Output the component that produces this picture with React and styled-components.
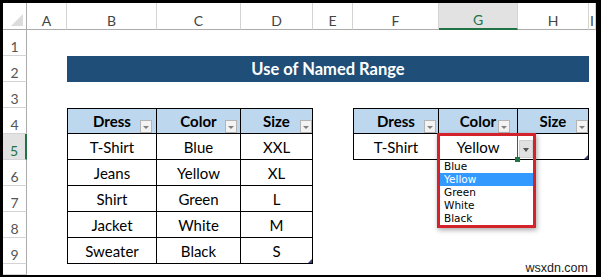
import React from "react";
import styled, { createGlobalStyle } from "styled-components";

const GlobalStyle = createGlobalStyle`
  html, body {
    margin: 0;
    padding: 0;
    background: #000;
  }
  body {
    width: 601px;
    height: 277px;
    overflow: hidden;
  }
`;

const Frame = styled.div`
  width: 601px;
  height: 277px;
  box-sizing: border-box;
  padding: 3px 5px 2px 3px;
  background: #000;
`;

const Sheet = styled.div`
  position: relative;
  width: 100%;
  height: 100%;
  background: #fff;
  display: grid;
  grid-template-columns: 24px 40px 90px 84px 72px 40px 86px 79px 71px 1fr;
  grid-template-rows: 27px repeat(9, 26px) 1fr;
  overflow: hidden;
  font-family: Lato, "Liberation Sans", sans-serif;
`;

const Corner = styled.div`
  grid-column: 1;
  grid-row: 1;
  position: relative;
  box-sizing: border-box;
  border-right: 1px solid #ababab;
  border-bottom: 1px solid #ababab;

  &::after {
    content: "";
    position: absolute;
    right: 3px;
    bottom: 3px;
    width: 12px;
    height: 12px;
    background: #dcdcdc;
    clip-path: polygon(100% 0, 100% 100%, 0 100%);
  }
`;

const ColHeader = styled.div`
  grid-row: 1;
  grid-column: ${(p) => p.col};
  display: flex;
  align-items: flex-end;
  justify-content: center;
  box-sizing: border-box;
  padding-bottom: 0;
  border-right: 1px solid #d4d4d4;
  border-bottom: ${(p) => (p.active ? "2px solid #217346" : "1px solid #ababab")};
  background: ${(p) => (p.active ? "#e2e2e2" : "#fff")};
  color: ${(p) => (p.active ? "#217346" : "#444")};
  font-size: 14px;
`;

const RowHeader = styled.div`
  grid-column: 1;
  grid-row: ${(p) => p.row};
  display: flex;
  align-items: flex-end;
  justify-content: center;
  box-sizing: border-box;
  padding-bottom: 0;
  border-bottom: 1px solid #d4d4d4;
  border-right: ${(p) => (p.active ? "2px solid #217346" : "1px solid #ababab")};
  background: ${(p) => (p.active ? "#e2e2e2" : "#fff")};
  color: ${(p) => (p.active ? "#217346" : "#555")};
  font-size: 14px;
`;

const Title = styled.div`
  grid-column: 3 / 10;
  grid-row: 3;
  display: flex;
  align-items: center;
  justify-content: center;
  background: #1f4e78;
  color: #fff;
  font-weight: 700;
  font-size: 16.5px;
`;

const Table = styled.div`
  grid-column: ${(p) => p.cols};
  grid-row: ${(p) => p.rows};
  position: relative;
  display: grid;
  grid-template-columns: ${(p) => p.widths};
  grid-template-rows: 25px;
  grid-auto-rows: 26px;
  box-sizing: border-box;
  border-top: 1px solid #000;
  border-left: 1px solid #000;
`;

const Cell = styled.div`
  position: relative;
  display: flex;
  align-items: center;
  justify-content: center;
  box-sizing: border-box;
  border-right: 1px solid #000;
  border-bottom: 1px solid #000;
  background: ${(p) => (p.head ? "#bdd7ee" : "#fff")};
  font-weight: ${(p) => (p.head ? 700 : 400)};
  font-size: 15px;
  color: #000;
`;

const FilterButton = styled.span`
  position: absolute;
  right: ${(p) => p.gap}px;
  bottom: 0;
  width: 12px;
  height: 13px;
  box-sizing: border-box;
  border: 1px solid #b4b4b4;
  background: #f3f3f3;

  &::after {
    content: "";
    position: absolute;
    left: 2px;
    top: 5px;
    border-left: 3px solid transparent;
    border-right: 3px solid transparent;
    border-top: 3px solid #808080;
  }
`;

const ResizeMark = styled.span`
  position: absolute;
  right: 1px;
  bottom: 1px;
  width: 4px;
  height: 4px;
  background: #34408a;
  clip-path: polygon(100% 0, 100% 100%, 0 100%);
`;

const SelectionEdge = styled.span`
  position: absolute;
  right: -2px;
  top: -1px;
  width: 2px;
  height: 25px;
  background: #217346;
`;

const FillHandle = styled.span`
  position: absolute;
  right: -3px;
  bottom: -3px;
  width: 5px;
  height: 5px;
  background: #217346;
  z-index: 3;
`;

const DropButton = styled.span`
  position: absolute;
  left: 80px;
  top: 6px;
  width: 14px;
  height: 18px;
  box-sizing: border-box;
  border: 1px solid #d0d0d0;
  background: #e1e1e1;
  z-index: 1;

  &::after {
    content: "";
    position: absolute;
    left: 3px;
    top: 7px;
    border-left: 3.5px solid transparent;
    border-right: 3.5px solid transparent;
    border-top: 4px solid #555;
  }
`;

const DropFrame = styled.div`
  position: absolute;
  left: -2px;
  top: -1px;
  width: 99px;
  height: 95px;
  box-sizing: border-box;
  border: 3px solid #d3222a;
  box-shadow: 1px 2px 5px rgba(0, 0, 0, 0.35);
  display: flex;
  flex-direction: column;
  justify-content: flex-end;
  z-index: 2;
`;

const List = styled.ul`
  margin: 0;
  padding: 0;
  list-style: none;
  background: #fff;
  font-family: "DejaVu Sans", "Noto Sans", sans-serif;
  font-weight: 400;
  font-size: 10.5px;
`;

const ListItem = styled.li`
  height: 13px;
  line-height: 13px;
  padding-left: 4px;
  text-align: left;
  background: ${(p) => (p.selected ? "#3399ff" : "transparent")};
  color: ${(p) => (p.selected ? "#fff" : "#000")};
`;

const Watermark = styled.div`
  position: absolute;
  right: 8px;
  bottom: 0;
  font-family: "Liberation Sans", Arial, sans-serif;
  font-size: 12.5px;
  color: #1a1a1a;
`;

const columns = ["A", "B", "C", "D", "E", "F", "G", "H", "I"];

const dresses = [
  ["T-Shirt", "Blue", "XXL"],
  ["Jeans", "Yellow", "XL"],
  ["Shirt", "Green", "L"],
  ["Jacket", "White", "M"],
  ["Sweater", "Black", "S"],
];

const colorOptions = ["Blue", "Yellow", "Green", "White", "Black"];

function HeadCell({ label, gap }) {
  return (
    <Cell head>
      {label}
      <FilterButton gap={gap} />
    </Cell>
  );
}

export default function App() {
  return (
    <>
      <GlobalStyle />
      <Frame>
        <Sheet>
          <Corner />
          {columns.map((c, i) => (
            <ColHeader key={c} col={i + 2} active={c === "G"}>
              {c}
            </ColHeader>
          ))}
          {Array.from({ length: 10 }, (_, i) => (
            <RowHeader key={i} row={i + 2} active={i === 4}>
              {i < 9 ? i + 1 : ""}
            </RowHeader>
          ))}

          <Title>Use of Named Range</Title>

          <Table cols="3 / 6" rows="5 / 11" widths="89px 84px 72px">
            <HeadCell label="Dress" gap={4} />
            <HeadCell label="Color" gap={3} />
            <HeadCell label="Size" gap={0} />
            {dresses.map((row) =>
              row.map((v, j) => <Cell key={row[0] + j}>{v}</Cell>)
            )}
            <ResizeMark />
          </Table>

          <Table cols="7 / 10" rows="5 / 7" widths="85px 79px 71px">
            <HeadCell label="Dress" gap={2} />
            <HeadCell label="Color" gap={7} />
            <HeadCell label="Size" gap={0} />
            <Cell>T-Shirt</Cell>
            <Cell>
              Yellow
              <SelectionEdge />
              <FillHandle />
              <DropButton />
              <DropFrame>
                <List>
                  {colorOptions.map((o) => (
                    <ListItem key={o} selected={o === "Yellow"}>
                      {o}
                    </ListItem>
                  ))}
                </List>
              </DropFrame>
            </Cell>
            <Cell />
            <ResizeMark />
          </Table>

          <Watermark>wsxdn.com</Watermark>
        </Sheet>
      </Frame>
    </>
  );
}
